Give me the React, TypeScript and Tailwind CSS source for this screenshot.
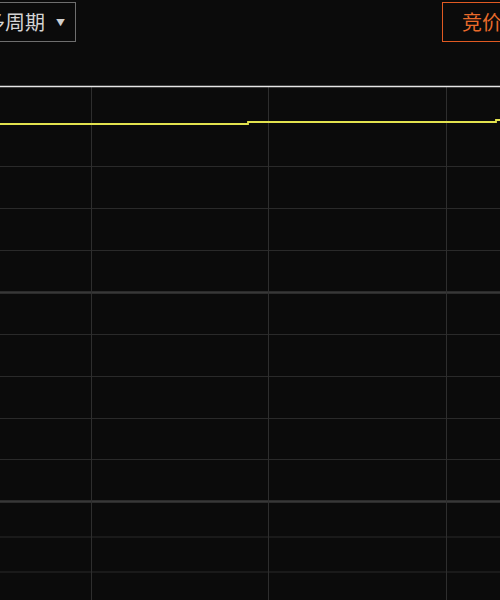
const hLines = [
  { y: 166.5, w: 1 },
  { y: 208.5, w: 1 },
  { y: 250.5, w: 1 },
  { y: 292.5, w: 2.5 },
  { y: 334.5, w: 1 },
  { y: 376.5, w: 1 },
  { y: 418.5, w: 1 },
  { y: 459.5, w: 1 },
  { y: 501.5, w: 2.5 },
  { y: 537, w: 1 },
  { y: 572, w: 1 },
];

const vLines = [91.5, 268.5, 446.5];

export default function App() {
  return (
    <div
      className="relative flex h-[600px] w-[500px] flex-col overflow-hidden bg-[#0b0b0b]"
      style={{ fontFamily: '"Noto Sans CJK SC", "Noto Sans", sans-serif' }}
    >
      <header className="flex h-[44px] shrink-0 items-start justify-between pt-[2px]">
        <div className="ml-[-26px] flex h-[40px] items-center border border-[#6e6e6e] pl-[10px] pr-[10px] text-[20px] leading-none text-[#d4d4d4]">
          <span>多周期</span>
          <span className="ml-[11px] text-[9px] text-[#cfcfcf]">▼</span>
        </div>
        <div className="mr-[-42px] flex h-[40px] w-[100px] items-center border border-[#e05a22] pl-[19px] text-[20px] leading-none text-[#e86a2a]">
          <span className="whitespace-nowrap">竞价</span>
        </div>
      </header>

      <svg width="500" height="556" viewBox="0 44 500 556" className="block">
        {hLines.map((l) => (
          <line
            key={l.y}
            x1="0"
            x2="500"
            y1={l.y}
            y2={l.y}
            stroke={l.w > 1 ? "#383838" : "#2a2a2a"}
            strokeWidth={l.w}
          />
        ))}
        {vLines.map((x) => (
          <line key={x} x1={x} x2={x} y1="87" y2="600" stroke="#2e2e2e" strokeWidth="1" />
        ))}
        <line x1="0" x2="500" y1="86.5" y2="86.5" stroke="#e6e6e6" strokeWidth="1.6" />
        <polyline
          points="0,124 248,124 248,122 496,122 496,120 500,120"
          fill="none"
          stroke="#e2e24e"
          strokeWidth="1.8"
        />
      </svg>
    </div>
  );
}
